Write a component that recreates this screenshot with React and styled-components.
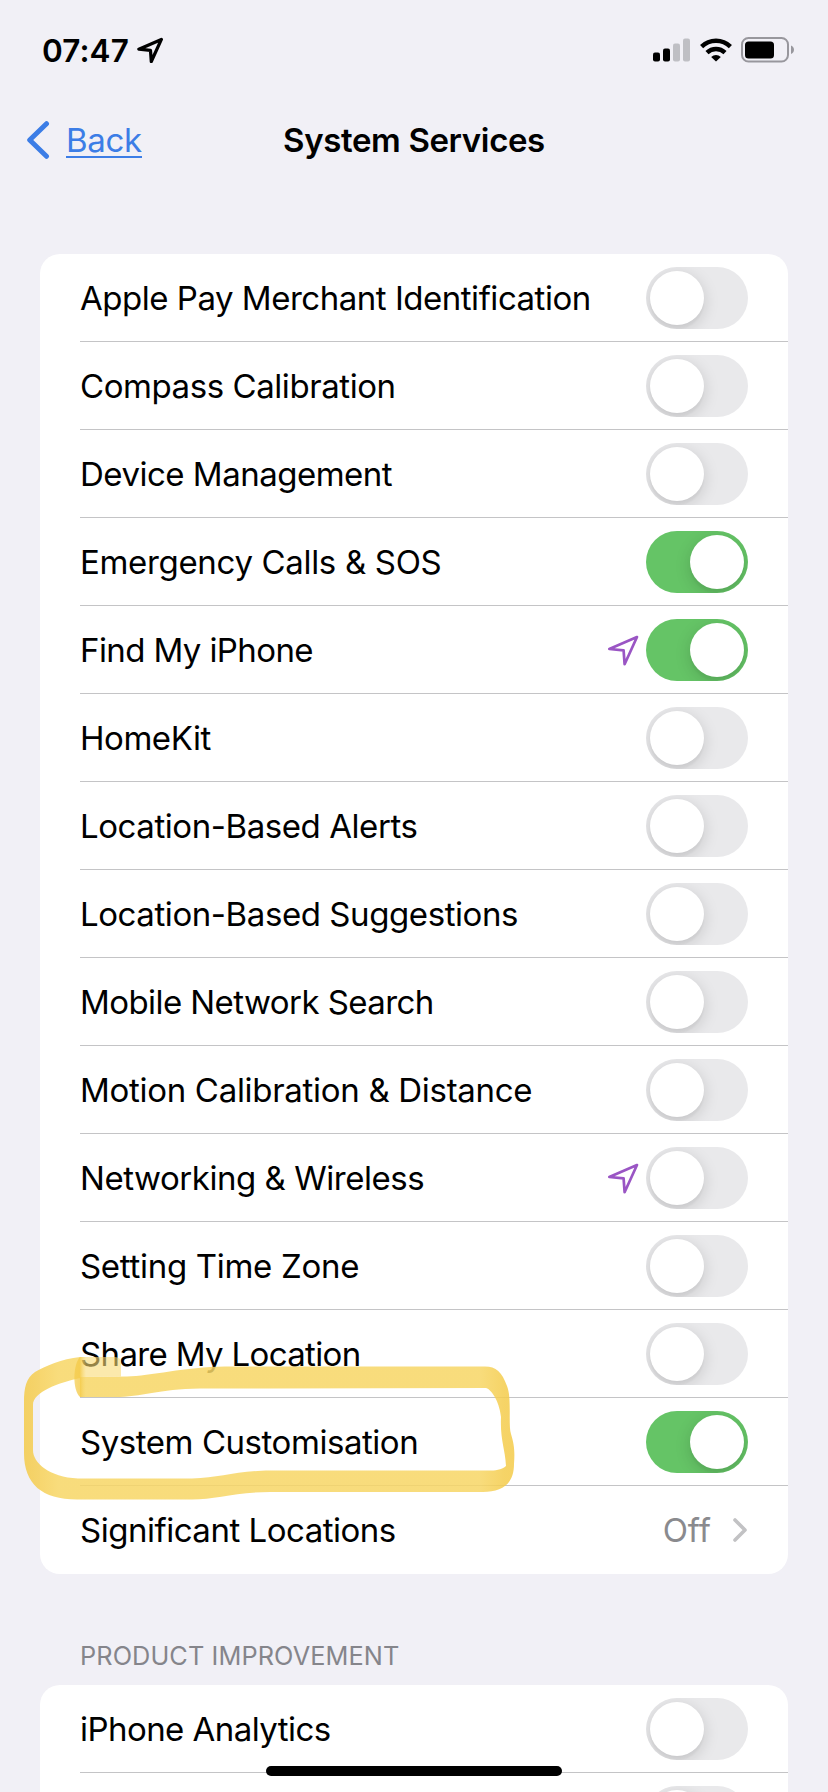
import React from 'react';
import styled, { createGlobalStyle } from 'styled-components';

const GlobalStyle = createGlobalStyle`
  *, *::before, *::after{
    box-sizing: border-box;
  }
  html, body{
    margin: 0;
    height: 1792px;
    overflow: hidden;
    background: #f1f0f6;
  }
  body{
    font-family: Inter, "Liberation Sans", sans-serif;
    color: #000;
  }
`;

const Screen = styled.div`
  position: relative;
  width: 828px;
  height: 1792px;
  overflow: hidden;
  background: #f1f0f6;
`;

const StatusBar = styled.header`
  display: flex;
  justify-content: space-between;
  align-items: center;
  height: 100px;
  padding: 0 33px 0 42px;
`;

const Clock = styled.div`
  display: flex;
  align-items: center;
  gap: 8px;
  font-size: 31.5px;
  font-weight: 600;
  letter-spacing: 0.1px;
`;

const StatusIcons = styled.div`
  display: flex;
  align-items: center;
  gap: 9px;
  svg{
    display: block;
  }
`;

const NavBar = styled.nav`
  display: grid;
  grid-template-columns: 240px 1fr 240px;
  align-items: center;
  height: 80px;
  padding: 0 26px;
`;

const BackLink = styled.a`
  display: flex;
  align-items: center;
  gap: 16px;
  color: #3c7de6;
  font-size: 33px;
  letter-spacing: -0.3px;
  span{
    padding-top: 2px;
    border-bottom: 2px solid #3c7de6;
    line-height: 32px;
  }
`;

const Title = styled.h1`
  margin: 0;
  text-align: center;
  font-size: 33px;
  font-weight: 600;
  white-space: nowrap;
  letter-spacing: -0.37px;
`;

const Content = styled.main`
  padding: 74px 40px 0;
`;

const Card = styled.ul`
  margin: 0;
  padding: 0 0 0 40px;
  list-style: none;
  background: #fff;
  border-radius: 20px;
  overflow: hidden;
`;

const Row = styled.li`
  display: flex;
  align-items: center;
  height: 88px;
  padding-right: 40px;
  box-shadow: ${({ $last }) => ($last ? 'none' : 'inset 0 -1px #c4c4c6')};
  > svg{
    margin-right: 7px;
  }
`;

const Label = styled.span`
  flex: 1;
  font-size: 33px;
  white-space: nowrap;
  letter-spacing: ${({ $tracking }) => $tracking}px;
`;

const Switch = styled.span`
  display: flex;
  justify-content: ${({ $on }) => ($on ? 'flex-end' : 'flex-start')};
  width: 102px;
  height: 62px;
  padding: 4px;
  border-radius: 31px;
  overflow: hidden;
  background: ${({ $on }) => ($on ? '#65c466' : '#e9e9eb')};
  &::after{
    content: '';
    width: 54px;
    height: 54px;
    border-radius: 50%;
    background: #fff;
    box-shadow: 0 4px 16px rgba(0, 0, 0, 0.15), 0 4px 2px rgba(0, 0, 0, 0.03);
  }
`;

const Value = styled.span`
  display: flex;
  align-items: center;
  gap: 20px;
  color: #8a8a8e;
  font-size: 33px;
`;

const SectionHeader = styled.h2`
  margin: 0;
  height: 111px;
  padding: 65px 0 0 40px;
  color: #85858b;
  font-size: 25.3px;
  font-weight: 400;
  line-height: 34px;
  letter-spacing: 0.1px;
  white-space: nowrap;
`;

const HomeIndicator = styled.div`
  position: absolute;
  left: 266px;
  top: 1766px;
  width: 296px;
  height: 10px;
  border-radius: 5px;
  background: #000;
`;

const Highlight = styled.svg`
  position: absolute;
  left: 0;
  top: 1340px;
  pointer-events: none;
`;

const LocationArrow = ({ size, color, weight }) => (
  <svg width={size} height={size} viewBox="0 0 32 32" fill="none" stroke={color} strokeWidth={weight} strokeLinejoin="round">
    <path d="M30 3 L2.300 15 L16.600 16.400 L17.600 30.200 Z" />
  </svg>
);

const Signal = () => (
  <svg width="38" height="24" viewBox="0 0 38 24">
    <rect x="0" y="14.5" width="7" height="9" rx="2" />
    <rect x="10" y="10.5" width="7" height="13" rx="2" />
    <rect x="20" y="5.5" width="7" height="18" rx="2" fill="#bfbfc4" />
    <rect x="30" y="0.5" width="7" height="23" rx="2" fill="#bfbfc4" />
  </svg>
);

const Wifi = () => (
  <svg width="32" height="24" viewBox="0 0 32 24">
    <g fill="none" stroke="#000" strokeWidth="4.4">
      <path d="M1.6 8.6 A20.5 20.5 0 0 1 30.4 8.6" />
      <path d="M7 14.6 A13 13 0 0 1 25 14.6" />
    </g>
    <path d="M16 23.5 L11.2 18.9 A7 7 0 0 1 20.8 18.9 Z" />
  </svg>
);

const Battery = () => (
  <svg width="54" height="26" viewBox="0 0 54 26">
    <rect x="1" y="1" width="46" height="23.5" rx="6.5" fill="none" stroke="#98979d" strokeWidth="2" />
    <rect x="4" y="4.5" width="29" height="17" rx="3.5" />
    <path d="M50 8.5 C54 10 54 15.5 50 17 Z" fill="#98979d" />
  </svg>
);

const services = [
  { label: 'Apple Pay Merchant Identification', tracking: -0.48 },
  { label: 'Compass Calibration', tracking: -0.43 },
  { label: 'Device Management', tracking: -0.5 },
  { label: 'Emergency Calls & SOS', tracking: -0.33, on: true },
  { label: 'Find My iPhone', tracking: -0.6, on: true, located: true },
  { label: 'HomeKit', tracking: -0.45 },
  { label: 'Location-Based Alerts', tracking: -0.43 },
  { label: 'Location-Based Suggestions', tracking: -0.42 },
  { label: 'Mobile Network Search', tracking: -0.57 },
  { label: 'Motion Calibration & Distance', tracking: -0.3 },
  { label: 'Networking & Wireless', tracking: -0.46, located: true },
  { label: 'Setting Time Zone', tracking: -0.3 },
  { label: 'Share My Location', tracking: -0.65 },
  { label: 'System Customisation', tracking: -0.45, on: true },
  { label: 'Significant Locations', tracking: -0.49, value: 'Off' },
];

const improvements = [
  { label: 'iPhone Analytics', tracking: -0.55 },
  { label: '' },
];

const ServiceRow = ({ label, on, located, value, tracking = 0, last }) => (
  <Row $last={last}>
    <Label $tracking={tracking}>{label}</Label>
    {located && <LocationArrow size={32} color="#9a55c4" weight={2.7} />}
    {value ? (
      <Value>
        {value}
        <svg width="17" height="26" viewBox="0 0 17 26" fill="none" stroke="#c2c2c4" strokeWidth="3.6" strokeLinecap="round" strokeLinejoin="round">
          <path d="M4 3 L14 13 L4 23" />
        </svg>
      </Value>
    ) : <Switch $on={on} />}
  </Row>
);

const App = () => (
  <>
    <GlobalStyle />
    <Screen>
      <StatusBar>
        <Clock>
          07:47
          <LocationArrow size={26} color="#000" weight={4} />
        </Clock>
        <StatusIcons>
          <Signal />
          <Wifi />
          <Battery />
        </StatusIcons>
      </StatusBar>
      <NavBar>
        <BackLink>
          <svg width="24" height="40" viewBox="0 0 24 40" fill="none" stroke="#3c7de6" strokeWidth="5" strokeLinecap="round" strokeLinejoin="round">
            <path d="M20.5 3.7 L3.7 20 L20.5 36.3" />
          </svg>
          <span>Back</span>
        </BackLink>
        <Title>System Services</Title>
      </NavBar>
      <Content>
        <Card>
          {services.map((item, i) => (
            <ServiceRow key={item.label} {...item} last={i === services.length - 1} />
          ))}
        </Card>
        <SectionHeader>PRODUCT IMPROVEMENT</SectionHeader>
        <Card>
          {improvements.map(item => <ServiceRow key={item.label} {...item} />)}
        </Card>
      </Content>
      <Highlight width="540" height="180" viewBox="0 1340 540 180">
        <defs>
          <linearGradient id="marker" gradientUnits="userSpaceOnUse" x1="24" y1="0" x2="514" y2="0">
            <stop offset="0" stopColor="#f4cb49" />
            <stop offset="0.02" stopColor="#f5cd50" />
            <stop offset="0.07" stopColor="#f7d665" />
            <stop offset="0.93" stopColor="#f7d665" />
            <stop offset="0.98" stopColor="#f4cc4c" />
            <stop offset="1" stopColor="#f4cb49" />
          </linearGradient>
          <linearGradient id="cap" x1="0" y1="0" x2="1" y2="0">
            <stop offset="0" stopColor="#f4ca48" stopOpacity="0.7" />
            <stop offset="0.5" stopColor="#f4ca48" stopOpacity="0.8" />
            <stop offset="1" stopColor="#f7d665" stopOpacity="0" />
          </linearGradient>
        </defs>
        <path
          fill="url(#marker)"
          fillOpacity="0.85"
          d="M80 1357 C62 1359 45 1366 35 1372 C26 1378 24 1388 24 1402 V1453 C24 1484 42 1499.500 77 1499.500 H192 C215 1499.500 235 1492 270 1492 H483 C501 1492 514 1485 514 1464 C515 1450 514 1444 511 1434 C508 1425 512 1398 507 1386 C502 1372 496 1366.500 485 1366.500 H225 C185 1367 150 1376 127 1376.500 L80 1377 L80 1397 H115 C142 1397 158 1389 200 1388.500 H270 L486 1388 C493 1390 500 1405 501 1417 C500 1440 505 1448 506 1466 C500 1471 493 1470.500 485 1470.500 H270 C235 1471 220 1478 192 1478.500 H78 C49 1477 33 1463 33 1450 V1405 C33 1392 58 1383 80 1378 Z"
        />
        <path fill="#f8da74" fillOpacity="0.6" d="M80 1357 H115 Q121 1357 121 1363 V1376.500 L80 1377 Z" />
        <path fill="url(#cap)" d="M80 1357 C73 1364 72 1390 80 1397 H86 V1357 Z" />
      </Highlight>
      <HomeIndicator />
    </Screen>
  </>
);

export default App;
